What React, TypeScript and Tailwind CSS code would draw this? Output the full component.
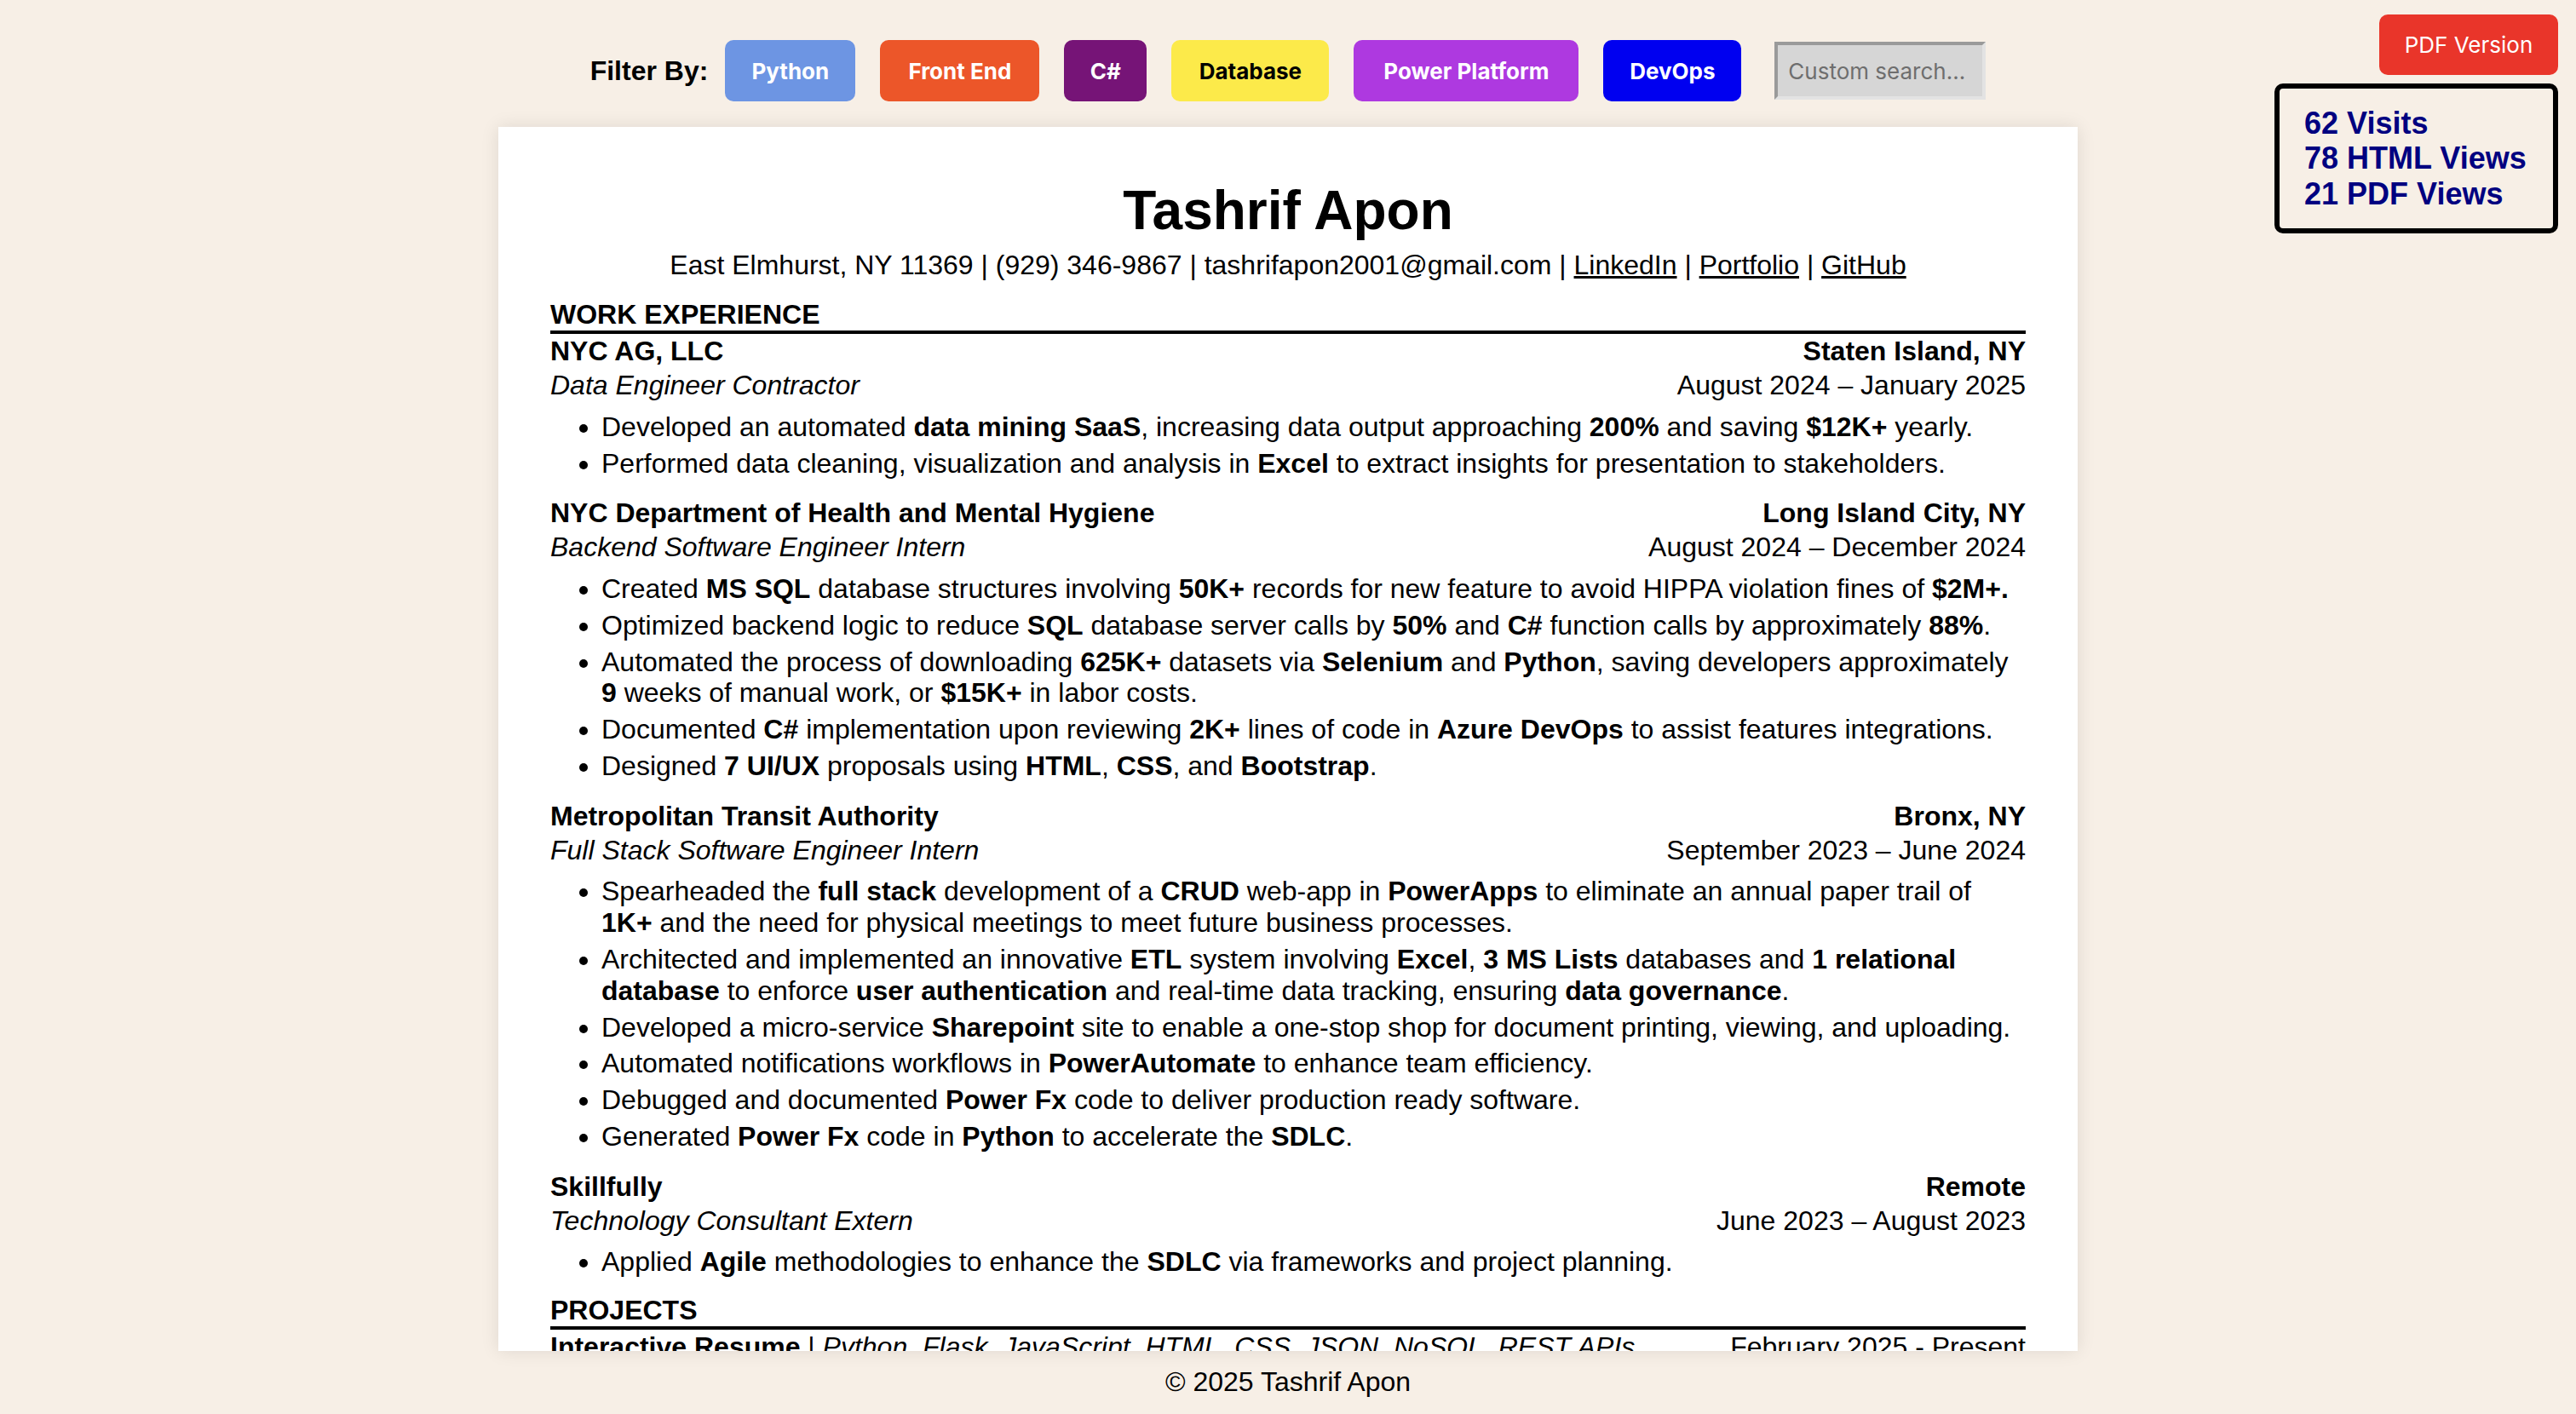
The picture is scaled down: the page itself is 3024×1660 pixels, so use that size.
import React from 'react';

const B: React.FC<{ children: React.ReactNode }> = ({ children }) => <strong className="font-bold">{children}</strong>;

type Job = {
  company: string;
  place: string;
  title: string;
  dates: string;
  bullets: React.ReactNode[];
};

const jobs: Job[] = [
  {
    company: 'NYC AG, LLC',
    place: 'Staten Island, NY',
    title: 'Data Engineer Contractor',
    dates: 'August 2024 – January 2025',
    bullets: [
      <>Developed an automated <B>data mining SaaS</B>, increasing data output approaching <B>200%</B> and saving <B>$12K+</B> yearly.</>,
      <>Performed data cleaning, visualization and analysis in <B>Excel</B> to extract insights for presentation to stakeholders.</>,
    ],
  },
  {
    company: 'NYC Department of Health and Mental Hygiene',
    place: 'Long Island City, NY',
    title: 'Backend Software Engineer Intern',
    dates: 'August 2024 – December 2024',
    bullets: [
      <>Created <B>MS SQL</B> database structures involving <B>50K+</B> records for new feature to avoid HIPPA violation fines of <B>$2M+.</B></>,
      <>Optimized backend logic to reduce <B>SQL</B> database server calls by <B>50%</B> and <B>C#</B> function calls by approximately <B>88%</B>.</>,
      <>Automated the process of downloading <B>625K+</B> datasets via <B>Selenium</B> and <B>Python</B>, saving developers approximately <B>9</B> weeks of manual work, or <B>$15K+</B> in labor costs.</>,
      <>Documented <B>C#</B> implementation upon reviewing <B>2K+</B> lines of code in <B>Azure DevOps</B> to assist features integrations.</>,
      <>Designed <B>7 UI/UX</B> proposals using <B>HTML</B>, <B>CSS</B>, and <B>Bootstrap</B>.</>,
    ],
  },
  {
    company: 'Metropolitan Transit Authority',
    place: 'Bronx, NY',
    title: 'Full Stack Software Engineer Intern',
    dates: 'September 2023 – June 2024',
    bullets: [
      <>Spearheaded the <B>full stack</B> development of a <B>CRUD</B> web-app in <B>PowerApps</B> to eliminate an annual paper trail of <B>1K+</B> and the need for physical meetings to meet future business processes.</>,
      <>Architected and implemented an innovative <B>ETL</B> system involving <B>Excel</B>, <B>3 MS Lists</B> databases and <B>1 relational database</B> to enforce <B>user authentication</B> and real-time data tracking, ensuring <B>data governance</B>.</>,
      <>Developed a micro-service <B>Sharepoint</B> site to enable a one-stop shop for document printing, viewing, and uploading.</>,
      <>Automated notifications workflows in <B>PowerAutomate</B> to enhance team efficiency.</>,
      <>Debugged and documented <B>Power Fx</B> code to deliver production ready software.</>,
      <>Generated <B>Power Fx</B> code in <B>Python</B> to accelerate the <B>SDLC</B>.</>,
    ],
  },
  {
    company: 'Skillfully',
    place: 'Remote',
    title: 'Technology Consultant Extern',
    dates: 'June 2023 – August 2023',
    bullets: [
      <>Applied <B>Agile</B> methodologies to enhance the <B>SDLC</B> via frameworks and project planning.</>,
    ],
  },
];

const filters = [
  { label: 'Python', cls: 'w-[153px] bg-[#6d95e3] text-white' },
  { label: 'Front End', cls: 'w-[187px] bg-[#ec5629] text-white' },
  { label: 'C#', cls: 'w-[97px] bg-[#761477] text-white' },
  { label: 'Database', cls: 'w-[185px] bg-[#fcea4a] text-black' },
  { label: 'Power Platform', cls: 'w-[264px] bg-[#ae39e0] text-white' },
  { label: 'DevOps', cls: 'w-[162px] bg-[#0000f0] text-white' },
];

const App: React.FC = () => {
  return (
    <div className="relative min-h-screen bg-[#f7efe6] font-['Liberation_Sans',Arial,sans-serif] text-black">
      {/* filter bar */}
      <div className="flex items-center justify-center pt-[47px]">
        <span className="mr-[20px] text-[32px] font-bold leading-[37px]">Filter By:</span>
        <div className="flex gap-[29px]">
          {filters.map((f) => (
            <button
              key={f.label}
              className={`h-[72px] rounded-[10px] font-['Inter',sans-serif] text-[26px] font-bold ${f.cls}`}
            >
              {f.label}
            </button>
          ))}
        </div>
        <input
          placeholder="Custom search..."
          className="ml-[39px] h-[68px] w-[248px] border-4 border-t-[#9a9a9a] border-l-[#9a9a9a] border-b-[#e3e3e3] border-r-[#e3e3e3] bg-[#d6d6d6] pl-[12px] font-['Inter',sans-serif] text-[26px] outline-none placeholder:text-[#6e6e6e]"
        />
      </div>

      {/* resume card */}
      <div className="mx-auto mt-[30px] h-[1437px] w-[1854px] overflow-hidden bg-white px-[61px] pt-[62px] leading-[36.8px] text-[32px] shadow-[0_0_20px_rgba(0,0,0,0.1)]">
        <h1 className="text-center text-[64px] font-bold leading-[73.6px]">Tashrif Apon</h1>
        <p className="mt-[8px] text-center">
          East Elmhurst, NY 11369 | (929) 346-9867 | tashrifapon2001@gmail.com |{' '}
          <a className="underline">LinkedIn</a> | <a className="underline">Portfolio</a> |{' '}
          <a className="underline">GitHub</a>
        </p>

        <h2 className="mt-[22px] border-b-4 border-black font-bold">WORK EXPERIENCE</h2>
        {jobs.map((j, i) => (
          <div key={j.company} className={i === 0 ? 'mt-[2px]' : 'mt-[22px]'}>
            <div className="flex justify-between font-bold">
              <span>{j.company}</span>
              <span>{j.place}</span>
            </div>
            <div className="mt-[3px] flex justify-between">
              <span className="italic">{j.title}</span>
              <span>{j.dates}</span>
            </div>
            <ul className="mt-[12px] list-disc space-y-[6px] pl-[60px]">
              {j.bullets.map((b, k) => (
                <li key={k}>{b}</li>
              ))}
            </ul>
          </div>
        ))}

        <h2 className="mt-[20px] border-b-4 border-black font-bold">PROJECTS</h2>
        <div className="mt-[2px] flex justify-between">
          <span>
            <B>Interactive Resume</B> | <span className="italic">Python, Flask, JavaScript, HTML, CSS, JSON, NoSQL, REST APIs</span>
          </span>
          <span>February 2025 - Present</span>
        </div>
        <ul className="mt-[12px] list-disc space-y-[6px] pl-[60px]">
          <li>Built an interactive resume website with filtering by skill category and custom search.</li>
        </ul>
      </div>

      <footer className="mt-[18px] text-center text-[32px] leading-[36.8px]">© 2025 Tashrif Apon</footer>

      {/* top-right corner */}
      <div className="absolute right-[21px] top-[17px] flex flex-col items-end gap-[10px]">
        <button className="h-[71px] w-[210px] rounded-[10px] bg-[#e9352a] font-['Inter',sans-serif] text-[26px] text-white">
          PDF Version
        </button>
        <div className="w-[333px] whitespace-nowrap rounded-[10px] border-[6px] border-black px-[29px] py-[20px] text-[36px] font-bold leading-[41.4px] text-[#000080]">
          <div>62 Visits</div>
          <div>78 HTML Views</div>
          <div>21 PDF Views</div>
        </div>
      </div>
    </div>
  );
};

export default App;
